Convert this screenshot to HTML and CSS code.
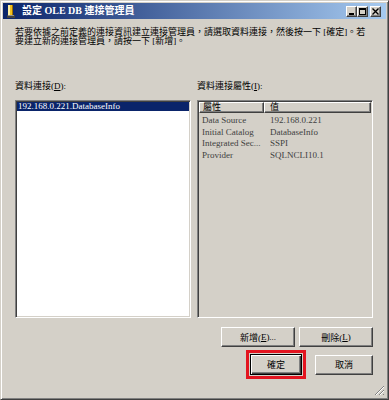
FILE: index.html
```html
<!DOCTYPE html>
<html lang="zh-Hant">
<head>
    <meta charset="UTF-8">
    <meta name="viewport" content="width=device-width, initial-scale=1.0">
    <title>設定 OLE DB 連接管理員</title>
    <link rel="stylesheet" href="styles.css">
</head>
<body>
    <div class="window">
        <div class="titlebar">
            <span class="app-icon">
                <svg width="8" height="13" viewBox="0 0 8 13">
                    <rect x="1" y="0" width="5" height="10" fill="#f0c020"/>
                    <rect x="1" y="0" width="2" height="10" fill="#fff0a0"/>
                    <rect x="5" y="0" width="1" height="10" fill="#a07000"/>
                    <rect x="0" y="10" width="8" height="3" fill="#404040"/>
                    <rect x="1" y="10" width="6" height="1" fill="#909090"/>
                </svg>
            </span>
            <span class="title">設定 OLE DB 連接管理員</span>
            <div class="caption-btns">
                <span class="cbtn">
                    <svg width="7" height="7" viewBox="0 0 7 7"><rect x="1" y="5" width="5" height="2" fill="#000"/></svg>
                </span>
                <span class="cbtn">
                    <svg width="7" height="7" viewBox="0 0 7 7"><rect x="0.5" y="0.5" width="6" height="6" fill="none" stroke="#000"/><rect x="0" y="0" width="7" height="2" fill="#000"/></svg>
                </span>
                <span class="cbtn close">
                    <svg width="7" height="7" viewBox="0 0 7 7"><path d="M0.5 0.5 L6.5 6.5 M6.5 0.5 L0.5 6.5" stroke="#000" stroke-width="1.4"/></svg>
                </span>
            </div>
        </div>

        <div class="content">
            <p class="desc">若要依據之前定義的連接資訊建立連接管理員，請選取資料連接，然後按一下 [確定]。若<br>要建立新的連接管理員，請按一下 [新增]。</p>

            <div class="panes">
                <div class="pane">
                    <div class="label">資料連接(<u>D</u>):</div>
                    <div class="listbox">
                        <div class="item selected">192.168.0.221.DatabaseInfo</div>
                    </div>
                </div>
                <div class="pane">
                    <div class="label">資料連接屬性(<u>I</u>):</div>
                    <div class="grid">
                        <div class="grid-head">
                            <span class="hcell k">屬性</span>
                            <span class="hcell v">值</span>
                        </div>
                        <div class="grid-body">
                            <div class="grid-row"><span class="k">Data Source</span><span class="v">192.168.0.221</span></div>
                            <div class="grid-row"><span class="k">Initial Catalog</span><span class="v">DatabaseInfo</span></div>
                            <div class="grid-row"><span class="k">Integrated Sec...</span><span class="v">SSPI</span></div>
                            <div class="grid-row"><span class="k">Provider</span><span class="v">SQLNCLI10.1</span></div>
                        </div>
                    </div>
                </div>
            </div>

            <div class="btn-row top-row">
                <span class="btn wide">新增(<u>E</u>)...</span>
                <span class="btn wide">刪除(<u>L</u>)</span>
            </div>
            <div class="btn-row bottom-row">
                <span class="mark">
                    <span class="btn default">確定</span>
                </span>
                <span class="btn cancel">取消</span>
            </div>
        </div>

        <span class="grip">
            <svg width="11" height="11" viewBox="0 0 11 11">
                <path d="M10 1 L1 10 M10 5 L5 10 M10 9 L9 10" stroke="#808080" stroke-width="1"/>
                <path d="M10 2 L2 10 M10 6 L6 10" stroke="#fff" stroke-width="1"/>
            </svg>
        </span>
    </div>
</body>
</html>
```

FILE: styles.css
```css
body{
    margin:0;
    font-family:"Liberation Serif", "Noto Sans CJK TC", serif;
    font-size:9px;
    color:#000;
}
.window{
    position:relative;
    width:389px;
    height:400px;
    box-sizing:border-box;
    background-color:#d4d0c8;
    border:1px solid;
    border-color:#d4d0c8 #404040 #404040 #d4d0c8;
    box-shadow:inset 1px 1px #fff, inset -1px -1px #808080;
    padding:2px;
    display:flex;
    flex-direction:column;
}

/* 標題列 */
.titlebar{
    height:16px;
    display:flex;
    align-items:center;
    padding-left:4px;
    padding-right:5px;
    background:linear-gradient(to right, #0a246a, #a6caf0);
}
.app-icon{
    width:8px;
    height:13px;
    display:flex;
}
.title{
    margin-left:7px;
    color:#fff;
    font-weight:bold;
    font-size:10px;
    line-height:16px;
    white-space:nowrap;
}
.caption-btns{
    margin-left:auto;
    display:flex;
}
.cbtn{
    width:11px;
    height:11px;
    box-sizing:border-box;
    background-color:#d4d0c8;
    border:1px solid;
    border-color:#fff #404040 #404040 #fff;
    box-shadow:inset -1px -1px #808080;
    display:flex;
    align-items:center;
    justify-content:center;
}
.cbtn.close{
    margin-left:2px;
}

/* 內容 */
.content{
    flex:1;
    padding:9px 13px 0 12px;
}
.desc{
    margin:0;
    line-height:9px;
    white-space:nowrap;
}
.panes{
    margin-top:35px;
    display:flex;
    gap:6px;
}
.pane{
    width:176px;
}
.label{
    line-height:11px;
    height:11px;
    margin-bottom:8px;
}
.label u{
    text-decoration:underline;
}
.listbox{
    height:218px;
    box-sizing:border-box;
    background-color:#fff;
    border:1px solid;
    border-color:#808080 #fff #fff #808080;
    box-shadow:inset 1px 1px #404040, inset -1px -1px #d4d0c8;
    padding:1px;
}
.item{
    line-height:9px;
    height:9px;
    padding-left:1px;
    white-space:nowrap;
}
.item.selected{
    background-color:#0a246a;
    color:#fff;
}

/* 屬性表格 */
.grid{
    height:218px;
    box-sizing:border-box;
    border:1px solid;
    border-color:#808080 #fff #fff #808080;
    box-shadow:inset 1px 1px #404040, inset -1px -1px #d4d0c8;
    padding:1px;
}
.grid-head{
    display:flex;
    height:11px;
}
.hcell{
    box-sizing:border-box;
    border:1px solid;
    border-color:#fff #404040 #404040 #fff;
    box-shadow:inset -1px -1px #808080;
    line-height:9px;
}
.grid .k{
    width:65px;
    padding-left:3px;
    box-sizing:border-box;
    white-space:nowrap;
}
.grid .v{
    flex:1;
    padding-left:6px;
}
.hcell.k{
    padding-left:3px;
}
.hcell.v{
    padding-left:5px;
}
.grid-body{
    padding-top:2px;
    color:#404040;
}
.grid-row{
    display:flex;
    height:11.7px;
    line-height:11.7px;
}

/* 按鈕 */
.btn-row{
    display:flex;
    justify-content:flex-end;
    align-items:center;
}
.top-row{
    margin-top:9px;
    gap:4px;
}
.bottom-row{
    margin-top:3px;
    gap:9px;
}
.btn{
    box-sizing:border-box;
    height:20px;
    display:flex;
    align-items:center;
    justify-content:center;
    background-color:#d4d0c8;
    border:1px solid;
    border-color:#fff #404040 #404040 #fff;
    box-shadow:inset -1px -1px #808080, inset 1px 1px #d4d0c8;
}
.btn.wide{
    width:74px;
}
.btn.cancel{
    width:58px;
}
.btn.default{
    width:52px;
    height:21px;
    border-color:#000;
    box-shadow:inset 1px 1px #fff, inset -1px -1px #404040, inset -2px -2px #808080;
}
/* 紅框標示 */
.mark{
    display:flex;
    border:3px solid #e3141f;
    padding:1px;
}
.grip{
    position:absolute;
    right:3px;
    bottom:3px;
    display:flex;
}
```
